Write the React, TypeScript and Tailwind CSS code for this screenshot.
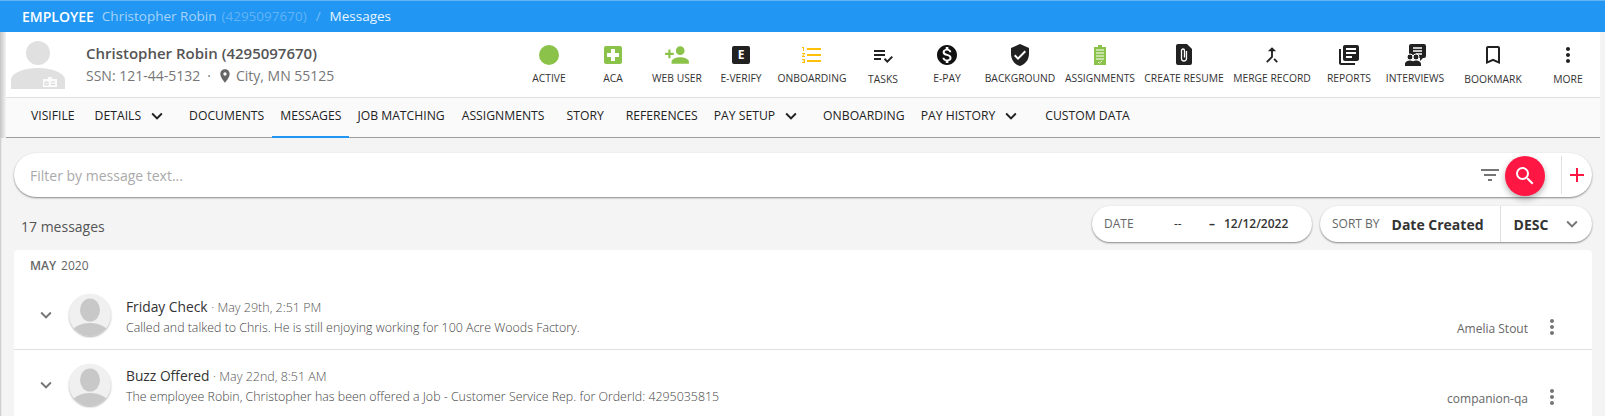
import React from 'react';
import {
  MdLocalHospital,
  MdPersonAdd,
  MdFormatListNumbered,
  MdPlaylistAddCheck,
  MdMonetizationOn,
  MdVerifiedUser,
  MdCallMerge,
  MdLibraryBooks,
  MdBookmarkBorder,
  MdMoreVert,
  MdSearch,
  MdFilterList,
  MdAdd,
  MdExpandMore,
  MdKeyboardArrowDown,
  MdPlace,
} from 'react-icons/md';

const font = { fontFamily: '"Open Sans", sans-serif' };

const actions = [
  { label: 'ACTIVE', w: 'w-[64px]', icon: <span className="block h-5 w-5 rounded-full bg-[#8bc34a]" /> },
  { label: 'ACA', w: 'w-[64px]', icon: <MdLocalHospital className="text-[24px] text-[#8bc34a]" /> },
  { label: 'WEB USER', w: 'w-[64px]', icon: <MdPersonAdd className="text-[26px] text-[#8bc34a]" /> },
  {
    label: 'E-VERIFY',
    w: 'w-[64px]',
    icon: (
      <span className="flex h-[18px] w-[18px] items-center justify-center rounded-[2px] bg-[#212121] text-[12px] font-bold leading-none text-white">
        E
      </span>
    ),
  },
  { label: 'ONBOARDING', w: 'w-[78px]', icon: <MdFormatListNumbered className="text-[24px] text-[#ffc107]" /> },
  { label: 'TASKS', w: 'w-[64px]', low: true, icon: <MdPlaylistAddCheck className="mt-[2px] text-[24px] text-[#212121]" /> },
  { label: 'E-PAY', w: 'w-[64px]', icon: <MdMonetizationOn className="text-[24px] text-[#111111]" /> },
  { label: 'BACKGROUND', w: 'w-[82px]', icon: <MdVerifiedUser className="text-[24px] text-[#212121]" /> },
  {
    label: 'ASSIGNMENTS',
    w: 'w-[78px]',
    icon: (
      <svg viewBox="0 0 12 20" className="h-[20px] w-[12px]">
        <path d="M4 0h4v2h4v18H0V2h4z" fill="#8bc34a" />
        <path d="M2 5h8M2 8h8M2 11h8M2 14h8" stroke="#fff" strokeWidth="1" />
        <path d="M4 17l1.5 1.2L8 16" stroke="#fff" strokeWidth="0.8" fill="none" />
      </svg>
    ),
  },
  {
    label: 'CREATE RESUME',
    w: 'w-[90px]',
    icon: (
      <svg viewBox="0 0 16 21" className="h-[21px] w-[16px]">
        <path d="M2 0h9l5 5v14a2 2 0 0 1-2 2H2a2 2 0 0 1-2-2V2a2 2 0 0 1 2-2z" fill="#212121" />
        <path d="M10.5 7v7.5a2.5 2.5 0 0 1-5 0V6.5a1.5 1.5 0 0 1 3 0v7" stroke="#fff" strokeWidth="1.3" fill="none" />
      </svg>
    ),
  },
  { label: 'MERGE RECORD', w: 'w-[86px]', icon: <MdCallMerge className="text-[22px] text-[#212121]" /> },
  { label: 'REPORTS', w: 'w-[68px]', icon: <MdLibraryBooks className="text-[24px] text-[#212121]" /> },
  {
    label: 'INTERVIEWS',
    w: 'w-[64px]',
    icon: (
      <svg viewBox="0 0 21 22" className="h-[22px] w-[21px]">
        <path d="M6 0h13a2 2 0 0 1 2 2v10a2 2 0 0 1-2 2h-1l-3 3v-3H4V2a2 2 0 0 1 2-2z" fill="#212121" />
        <path d="M8 4h9M8 7h9M11 10h6" stroke="#fff" strokeWidth="1.4" />
        <circle cx="5" cy="13" r="3" fill="#212121" stroke="#fff" strokeWidth="1" />
        <circle cx="11" cy="13" r="3" fill="#212121" stroke="#fff" strokeWidth="1" />
        <path d="M0 22v-2c0-2 2.500-3.500 5-3.500 1.200 0 2.200.3 3 .8.800-.5 1.800-.8 3-.8 2.500 0 5 1.500 5 3.500v2z" fill="#212121" />
      </svg>
    ),
  },
  { label: 'BOOKMARK', w: 'w-[92px]', low: true, icon: <MdBookmarkBorder className="text-[24px] text-[#212121]" /> },
  { label: 'MORE', w: 'w-[58px]', low: true, icon: <MdMoreVert className="text-[24px] text-[#212121]" /> },
];

const tabs = [
  { label: 'VISIFILE', pad: 'pl-2 pr-[12px]' },
  { label: 'DETAILS', menu: true, pad: 'px-2' },
  { label: 'DOCUMENTS', pad: 'px-2' },
  { label: 'MESSAGES', active: true, pad: 'px-2' },
  { label: 'JOB MATCHING', pad: 'pl-2 pr-[9px]' },
  { label: 'ASSIGNMENTS', pad: 'px-2' },
  { label: 'STORY', pad: 'px-[14px]' },
  { label: 'REFERENCES', pad: 'px-2' },
  { label: 'PAY SETUP', menu: true, pad: 'px-2' },
  { label: 'ONBOARDING', pad: 'px-2' },
  { label: 'PAY HISTORY', menu: true, pad: 'pl-2 pr-[10px]' },
  { label: 'CUSTOM DATA', pad: 'px-2' },
];

const messages = [
  {
    title: 'Friday Check',
    date: 'May 29th, 2:51 PM',
    body: 'Called and talked to Chris. He is still enjoying working for 100 Acre Woods Factory.',
    by: 'Amelia Stout',
  },
  {
    title: 'Buzz Offered',
    date: 'May 22nd, 8:51 AM',
    body: 'The employee Robin, Christopher has been offered a Job - Customer Service Rep. for OrderId: 4295035815',
    by: 'companion-qa',
  },
];

function Avatar() {
  return (
    <span className="block h-[42px] w-[42px] overflow-hidden rounded-full bg-[#f0f0f0] shadow-[0_1px_2px_rgba(0,0,0,0.3)]">
      <svg viewBox="0 0 42 42" className="h-full w-full">
        <ellipse cx="21" cy="16" rx="10" ry="11.500" fill="#c8c8c8" />
        <ellipse cx="21" cy="39" rx="18" ry="10" fill="#c8c8c8" />
      </svg>
    </span>
  );
}

function MessageRow({ m, last }: { m: (typeof messages)[number]; last?: boolean }) {
  return (
    <div className={`flex h-[69px] items-center pl-[20px] pr-[28px] ${last ? '' : 'border-b border-[#e0e0e0]'}`}>
      <MdExpandMore className="w-6 shrink-0 text-[22px] text-[#757575]" />
      <div className="ml-[11px] shrink-0">
        <Avatar />
      </div>
      <div className="ml-[15px] mt-[4px] flex-1">
        <div className="text-[13.8px] leading-[20px] text-[#333]">
          {m.title} <span className="text-[12.5px] font-light text-[#555]">· {m.date}</span>
        </div>
        <div className="text-[12.4px] font-light leading-[20px] text-[#444]">{m.body}</div>
      </div>
      <div className="mt-[24px] flex items-center">
        <span className="mt-[4px] text-[12px] text-[#666]">{m.by}</span>
        <MdMoreVert className="ml-[12px] text-[24px] text-[#757575]" />
      </div>
    </div>
  );
}

export default function App() {
  return (
    <div style={font} className="h-[416px] w-[1605px] overflow-hidden bg-[#f4f4f4]">
      <div className="flex h-[32px] items-center border-t border-[#64b5f6] bg-[#2196f3] pl-[22px] text-[13.5px] text-white">
        <span className="text-[14px] font-semibold">EMPLOYEE</span>
        <span className="ml-[8px] text-white/60">Christopher Robin</span>
        <span className="ml-[5px] text-white/30">(4295097670)</span>
        <span className="mx-[9px] text-white/40">/</span>
        <span className="text-white/90">Messages</span>
      </div>

      <div className="bg-[linear-gradient(to_right,#c4c4c4,#f4f4f4_6px)] pl-[6px] pr-[5px]">
        <div className="flex h-[66px] items-center border-b border-[#e0e0e0] bg-white pr-[2px]">
          <svg viewBox="0 0 54 48" className="ml-[5px] h-[48px] w-[54px] shrink-0">
            <circle cx="27" cy="12" r="12" fill="#e0e0e0" />
            <path d="M0 48V39C0 32 13 27 27 27s27 5 27 12v9z" fill="#e0e0e0" />
            <path d="M32 38h5v-2h4v2h5v8H32z" fill="#fff" opacity="0.85" />
            <path d="M34 41h3v3h-3zM40 41h4M40 43.500h4" stroke="#d4d4d4" strokeWidth="1" fill="none" />
          </svg>
          <div className="ml-[21px] w-[431px] shrink-0">
            <div className="text-[15px] font-semibold leading-[22px] text-[#555]">Christopher Robin (4295097670)</div>
            <div className="mt-[1px] flex items-center text-[14px] leading-[22px] text-[#777]">
              SSN: 121-44-5132
              <span className="ml-[7px] mr-[6px]">·</span>
              <MdPlace className="mr-[3px] text-[16px] text-[#666]" />
              <span>City, MN 55125</span>
            </div>
          </div>
          {actions.map((a) => (
            <div key={a.label} className={`flex shrink-0 flex-col items-center pb-px ${a.w}`}>
              <div className="flex h-[22px] items-center justify-center">{a.icon}</div>
              <div className={`mt-[5px] text-[10.3px] leading-[14px] text-[#333] ${a.low ? 'translate-y-px' : ''}`}>{a.label}</div>
            </div>
          ))}
        </div>

        <div className="flex h-[40px] items-stretch border-b border-[#9e9e9e] bg-[#fafafa] pl-[17px]">
          {tabs.map((t) => (
            <div
              key={t.label}
              className={`-mb-px flex items-center border-b-2 pb-[2px] text-[12.2px] font-medium text-[#222] ${
                t.active ? 'border-[#2196f3]' : 'border-transparent'
              } ${t.pad}`}
            >
              {t.label}
              {t.menu && <MdKeyboardArrowDown className="ml-[5px] mr-[5px] text-[22px] text-[#212121]" />}
            </div>
          ))}
        </div>
      </div>

      <div className="bg-[linear-gradient(to_right,#c4c4c4,#f4f4f4_2px)] pl-[14px] pr-[13px]">
        <div className="pt-[15px]">
          <div className="flex h-[44px] items-center rounded-full bg-white pl-[16px] shadow-[0_1px_2px_rgba(0,0,0,0.45)]">
            <span className="flex-1 text-[14px] text-[#aaa]">Filter by message text...</span>
            <MdFilterList className="text-[24px] text-[#757575]" />
            <span className="ml-[3px] mt-[2px] flex h-[40px] w-[40px] items-center justify-center rounded-full bg-[#ff1744] shadow-[0_3px_6px_rgba(0,0,0,0.3)]">
              <MdSearch className="text-[24px] text-white" />
            </span>
            <span className="ml-[16px] h-[38px] w-px bg-[#e0e0e0]" />
            <MdAdd className="ml-[3px] mr-[3px] text-[24px] text-[#ff1744]" />
          </div>
        </div>

        <div className="mt-[9px] flex h-[36px] items-center">
          <span className="ml-[7px] flex-1 pt-[4px] text-[14px] text-[#555]">17 messages</span>
          <div className="flex h-[36px] w-[220px] items-center rounded-full bg-white pl-[12px] text-[12px] text-[#333] shadow-[0_1px_2px_rgba(0,0,0,0.45)]">
            <span className="w-[70px] text-[#666]">DATE</span>
            <span className="w-[35px]">--</span>
            <span className="w-[15px] font-bold">–</span>
            <span className="font-semibold">12/12/2022</span>
          </div>
          <div className="ml-[8px] flex h-[36px] w-[272px] items-center rounded-full bg-white pl-[12px] shadow-[0_1px_2px_rgba(0,0,0,0.45)]">
            <span className="text-[12px] text-[#666]">SORT BY</span>
            <span className="ml-[12px] w-[108px] text-[14px] font-bold text-[#333]">Date Created</span>
            <span className="h-full w-px bg-[#e0e0e0]" />
            <span className="ml-[13px] w-[47px] text-[14px] font-bold text-[#333]">DESC</span>
            <MdExpandMore className="text-[22px] text-[#757575]" />
          </div>
        </div>

        <div className="mt-[8px] rounded-t-[4px] bg-white">
          <div className="flex h-[31px] items-center pl-[16px] text-[12px] text-[#666]">
            <span className="font-semibold">MAY</span>
            <span className="ml-[5px]">2020</span>
          </div>
          {messages.map((m, i) => (
            <MessageRow key={m.title} m={m} last={i === messages.length - 1} />
          ))}
        </div>
      </div>
    </div>
  );
}
